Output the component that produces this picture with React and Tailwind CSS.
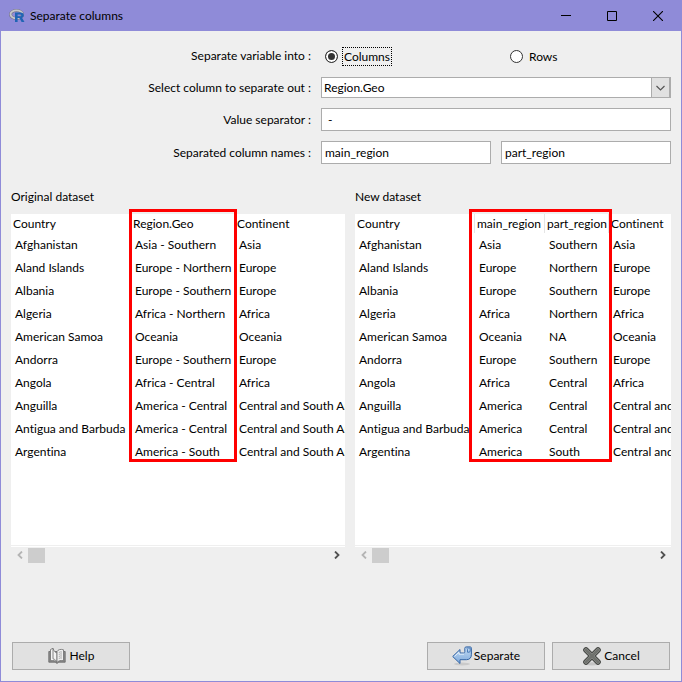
import React, { useState } from "react";

const originalRows = [
  ["Afghanistan", "Asia - Southern", "Asia"],
  ["Aland Islands", "Europe - Northern", "Europe"],
  ["Albania", "Europe - Southern", "Europe"],
  ["Algeria", "Africa - Northern", "Africa"],
  ["American Samoa", "Oceania", "Oceania"],
  ["Andorra", "Europe - Southern", "Europe"],
  ["Angola", "Africa - Central", "Africa"],
  ["Anguilla", "America - Central", "Central and South America"],
  ["Antigua and Barbuda", "America - Central", "Central and South America"],
  ["Argentina", "America - South", "Central and South America"],
];

const newRows = [
  ["Afghanistan", "Asia", "Southern", "Asia"],
  ["Aland Islands", "Europe", "Northern", "Europe"],
  ["Albania", "Europe", "Southern", "Europe"],
  ["Algeria", "Africa", "Northern", "Africa"],
  ["American Samoa", "Oceania", "NA", "Oceania"],
  ["Andorra", "Europe", "Southern", "Europe"],
  ["Angola", "Africa", "Central", "Africa"],
  ["Anguilla", "America", "Central", "Central and South America"],
  ["Antigua and Barbuda", "America", "Central", "Central and South America"],
  ["Argentina", "America", "South", "Central and South America"],
];

function RLogo() {
  return (
    <svg width="16" height="14" viewBox="0 0 16 14" aria-hidden="true">
      <ellipse cx="7.5" cy="5.500" rx="6" ry="4" fill="none" stroke="#77778a" strokeWidth="3" />
      <ellipse cx="7.500" cy="5.300" rx="6" ry="4" fill="none" stroke="#c6c6ca" strokeWidth="1.800" />
      <path
        d="M6 3.500h5.600c2 0 3.200 1 3.200 2.700 0 1.300-.7 2.100-1.800 2.500l2.500 4.300h-2.900l-2.200-4H8.600v4H6zM8.600 5.400v1.800h2.500c1.500 0 1.500-1.800 0-1.800z"
        fill="#2064b4"
        fillRule="evenodd"
      />
    </svg>
  );
}

function BookIcon() {
  return (
    <svg width="18" height="18" viewBox="0 0 18 18" aria-hidden="true">
      <path d="M.8 4.500v10.700h6.400l1.800 1.200 1.800-1.200h6.400V4.500z" fill="#8a8a8a" stroke="#666" strokeWidth=".8" />
      <path d="M9 15.500C7.500 13.700 5 13.200 2.500 13.800V2.500L5 1.300c.8 3 2.500 4.200 4 4.700z" fill="#f3f3f3" stroke="#777" strokeWidth=".9" />
      <path d="M5 1.300v10.500c2 .5 3.200 1.700 4 3.700" fill="none" stroke="#777" strokeWidth=".9" />
      <path d="M9 15.500c1.200-1.800 3.800-2.500 6.500-1.700V2.800C12.500 1.800 10 2.700 9 4.500z" fill="#efefef" stroke="#777" strokeWidth=".9" />
      <path d="M10.800 5.500c1-.6 2-.7 3.200-.5M10.800 7.500c1-.6 2-.7 3.200-.5M10.800 9.500c1-.6 2-.7 3.200-.5M10.800 11.500c1-.6 2-.7 3.200-.5" fill="none" stroke="#999" strokeWidth=".8" />
    </svg>
  );
}

function ApplyIcon() {
  return (
    <svg width="20" height="20" viewBox="0 0 20 20" aria-hidden="true">
      <defs>
        <linearGradient id="arrow-fill" x1="0" y1="0" x2="0" y2="1">
          <stop offset="0" stopColor="#c4dcf3" />
          <stop offset="1" stopColor="#7ea9dc" />
        </linearGradient>
      </defs>
      <ellipse cx="10" cy="18" rx="8" ry="1.500" fill="#cacaca" />
      <path
        d="M.7 10.500 8 3.500V7h3.500c1.200 0 1.300-.6 1.300-1.500V2.300c0-.9.500-1.400 1.400-1.400h4c.8 0 1.200.5 1.200 1.300v6.500c0 3-1.800 5-4.900 5H8v3.800z"
        fill="url(#arrow-fill)"
        stroke="#3465a4"
        strokeLinejoin="round"
      />
      <path d="M14.300 2h3.900v3c0 .8-.4 1.200-1.200 1.200h-1.500v-3" fill="none" stroke="#3f70b0" strokeWidth=".9" />
      <path d="M2.500 10.400L7 6.200v2h5" fill="none" stroke="#e8f2fc" strokeWidth=".9" />
    </svg>
  );
}

function CrossIcon() {
  return (
    <svg width="20" height="20" viewBox="0 0 20 20" aria-hidden="true">
      <ellipse cx="10" cy="17.800" rx="8" ry="1.600" fill="#c4c4c4" />
      <path d="M4 4l12 12M16 4L4 16" stroke="#40423f" strokeWidth="5.600" strokeLinecap="round" />
      <path d="M4 4l12 12M16 4L4 16" stroke="#8a8c88" strokeWidth="3.800" strokeLinecap="round" />
      <path d="M4 4l12 12M16 4L4 16" stroke="#6f716d" strokeWidth="2.400" strokeLinecap="round" />
    </svg>
  );
}

function TitleBar() {
  return (
    <header className="flex h-[30px] shrink-0 items-center bg-[#8f8bd8] pl-2">
      <RLogo />
      <h1 className="ml-[5px] flex-1">Separate columns</h1>
      <button type="button" aria-label="Minimize" className="flex h-full w-[46px] items-center justify-center">
        <svg width="10" height="10" viewBox="0 0 10 10"><path d="M0 4.500h10" stroke="#000" /></svg>
      </button>
      <button type="button" aria-label="Maximize" className="flex h-full w-[46px] items-center justify-center">
        <svg width="10" height="10" viewBox="0 0 10 10"><path d="M.5.5h9v9h-9z" fill="none" stroke="#000" /></svg>
      </button>
      <button type="button" aria-label="Close" className="flex h-full w-[46px] items-center justify-center">
        <svg width="10" height="10" viewBox="0 0 10 10"><path d="M0 0l10 10M10 0L0 10" stroke="#000" strokeWidth="1.100" /></svg>
      </button>
    </header>
  );
}

function RadioOption({ value, selected, onSelect }) {
  const active = selected === value;
  return (
    <label className="flex items-center gap-1 pl-1">
      <input
        type="radio"
        name="target"
        value={value}
        checked={active}
        onChange={() => onSelect(value)}
        className="size-[13px] appearance-none rounded-full border border-[#333] bg-white checked:bg-[#333] checked:shadow-[inset_0_0_0_2px_#fff]"
      />
      <span className={active ? "border border-dotted border-black px-px leading-[17px]" : "border border-transparent px-px leading-[17px]"}>
        {value}
      </span>
    </label>
  );
}

const fieldClass = "h-[23px] w-full min-w-0 border border-[#acacac] bg-white px-[3px] outline-none";

function ScrollBar() {
  return (
    <div className="flex h-4 items-center">
      <button type="button" aria-label="Scroll left" className="flex h-full w-[17px] items-center justify-center">
        <svg width="6" height="8" viewBox="0 0 6 8"><path d="M5 .5L1.500 4 5 7.500" fill="none" stroke="#b4b4b4" strokeWidth="1.800" /></svg>
      </button>
      <div className="h-[15px] w-[17px] bg-[#cdcdcd]" />
      <div className="flex-1" />
      <button type="button" aria-label="Scroll right" className="flex h-full w-[17px] items-center justify-center">
        <svg width="6" height="8" viewBox="0 0 6 8"><path d="M1 .5L4.500 4 1 7.500" fill="none" stroke="#505050" strokeWidth="1.800" /></svg>
      </button>
    </div>
  );
}

function DataPanel({ title, headers, widths, rows, highlight, divided }) {
  return (
    <section className="flex min-w-0 flex-col">
      <h2 className="mb-2 leading-[18px]">{title}</h2>
      <div className="relative flex flex-1 flex-col">
        <div className="flex-1 overflow-hidden bg-white">
          <table className="w-[480px] table-fixed border-collapse text-left">
            <colgroup>
              {widths.map((w, i) => <col key={i} className={w} />)}
            </colgroup>
            <thead>
              <tr className="h-[19px]">
                {headers.map((h, i) => (
                  <th
                    key={h}
                    scope="col"
                    className={
                      divided && i < headers.length - 1
                        ? "whitespace-nowrap p-0 pl-0.5 font-normal shadow-[inset_-1px_0_0_#e5e5e5]"
                        : "whitespace-nowrap p-0 pl-0.5 font-normal"
                    }
                  >
                    {h}
                  </th>
                ))}
              </tr>
            </thead>
            <tbody>
              {rows.map((row) => (
                <tr key={row[0]} className="h-[23px]">
                  {row.map((cell, i) => (
                    <td key={i} className="whitespace-nowrap p-0 pl-1">{cell}</td>
                  ))}
                </tr>
              ))}
            </tbody>
          </table>
        </div>
        <div className="h-0.5 border-b border-white" />
        <div className={highlight} />
      </div>
      <ScrollBar />
    </section>
  );
}

const actionClass = "flex h-7 w-[118px] items-center justify-center gap-0.5 border border-[#acacac] bg-[#e1e1e1]";

export default function App() {
  const [target, setTarget] = useState("Columns");
  return (
    <div className="flex min-h-screen flex-col border border-[#8f8bd8] bg-[#efefef] font-[Lato,'Open_Sans',sans-serif] text-[12px] leading-4 text-black [font-variant-ligatures:none]">
      <TitleBar />
      <form className="flex flex-1 flex-col px-2.5 pt-3.5" onSubmit={(e) => e.preventDefault()}>
        <div className="grid grid-cols-[6fr_7fr] items-center gap-2.5">
          <span id="target-label" className="text-right">Separate variable into :</span>
          <div role="radiogroup" aria-labelledby="target-label" className="grid h-[22px] grid-cols-2 gap-x-5">
            <RadioOption value="Columns" selected={target} onSelect={setTarget} />
            <RadioOption value="Rows" selected={target} onSelect={setTarget} />
          </div>

          <label htmlFor="source" className="text-right">Select column to separate out :</label>
          <div className="grid h-[21px]">
            <select
              id="source"
              defaultValue="Region.Geo"
              className="col-start-1 row-start-1 w-full appearance-none border border-[#acacac] bg-white px-0.5 leading-4 outline-none"
            >
              <option>Region.Geo</option>
              <option>Country</option>
              <option>Continent</option>
            </select>
            <span className="pointer-events-none col-start-1 row-start-1 flex w-5 items-center justify-center justify-self-end border border-r-2 border-[#acacac] bg-[#e1e1e1]">
              <svg width="9" height="6" viewBox="0 0 9 6"><path d="M.5 1l4 4 4-4" fill="none" stroke="#555" strokeWidth="1.200" /></svg>
            </span>
          </div>

          <label htmlFor="separator" className="text-right">Value separator :</label>
          <input id="separator" type="text" defaultValue=" -" className={fieldClass} />

          <label htmlFor="name-one" className="text-right">Separated column names :</label>
          <div className="grid grid-cols-2 gap-x-2.5">
            <input id="name-one" type="text" defaultValue="main_region" className={fieldClass} />
            <input type="text" aria-label="Second column name" defaultValue="part_region" className={fieldClass} />
          </div>
        </div>

        <div className="mt-6 grid flex-1 grid-cols-[334fr_316fr] gap-x-2.5">
          <DataPanel
            title="Original dataset"
            headers={["Country", "Region.Geo", "Continent"]}
            widths={["w-[120px]", "w-[104px]", "w-[256px]"]}
            rows={originalRows}
            highlight="pointer-events-none absolute left-[118px] -top-[5px] h-[253px] w-[108px] border-3 border-[#f00]"
          />
          <DataPanel
            title="New dataset"
            headers={["Country", "main_region", "part_region", "Continent"]}
            widths={["w-[120px]", "w-[70px]", "w-[64px]", "w-[226px]"]}
            rows={newRows}
            divided
            highlight="pointer-events-none absolute left-[114px] -top-[5px] h-[253px] w-[143px] border-3 border-[#f00]"
          />
        </div>

        <footer className="mt-[79px] mb-[11px] flex gap-x-[7px] px-px">
          <button type="button" className={actionClass}>
            <BookIcon />
            <span className="pl-0.5">Help</span>
          </button>
          <div className="flex-1" />
          <button type="submit" className={actionClass}>
            <ApplyIcon />
            Separate
          </button>
          <button type="button" className={actionClass}>
            <CrossIcon />
            Cancel
          </button>
        </footer>
      </form>
    </div>
  );
}
